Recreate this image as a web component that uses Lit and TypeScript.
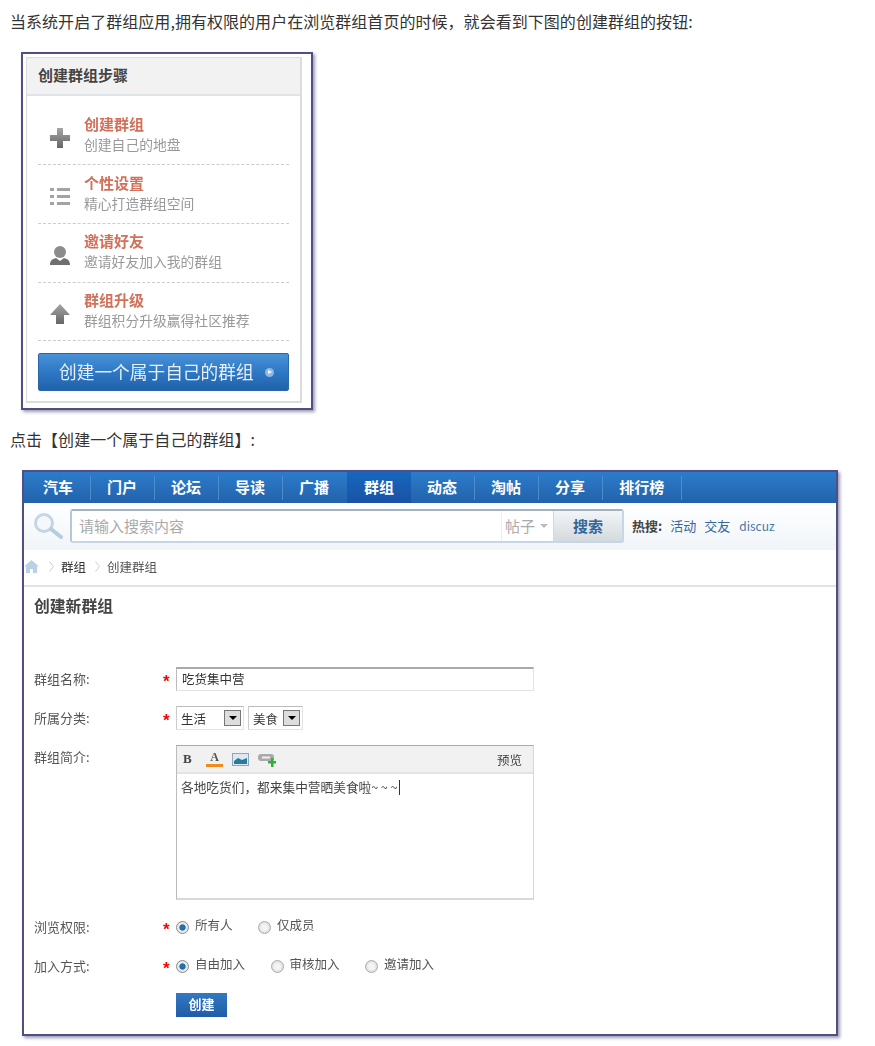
import { LitElement, html, css, svg } from "lit";
import { customElement } from "lit/decorators.js";

const steps = [
  { t: "创建群组", s: "创建自己的地盘", i: "plus" },
  { t: "个性设置", s: "精心打造群组空间", i: "list" },
  { t: "邀请好友", s: "邀请好友加入我的群组", i: "user" },
  { t: "群组升级", s: "群组积分升级赢得社区推荐", i: "up" },
];
const icons: Record<string, any> = {
  plus: svg`<path d="M8 1h6v7h7v6h-7v7H8v-7H1V8h7z" fill="url(#g)"/>`,
  list: svg`<g fill="#a3a3a3"><rect x="1" y="2" width="4" height="3"/><rect x="8" y="2" width="13" height="3"/><rect x="1" y="9" width="4" height="3"/><rect x="8" y="9" width="13" height="3"/><rect x="1" y="16" width="4" height="3"/><rect x="8" y="16" width="13" height="3"/></g>`,
  user: svg`<circle cx="11" cy="7" r="6" fill="#8c8c8c"/><path d="M1 20c0-5 3-6 6-7l4 3 4-3c3 1 6 2 6 7z" fill="#6f6f6f"/>`,
  up: svg`<path d="M11 1l10 11h-6v9H7v-9H1z" fill="url(#g)"/>`,
};
const stepIcon = (n: string) => html`<svg class="step-icon" viewBox="0 0 22 22"><defs><linearGradient id="g" x1="0" y1="0" x2="0" y2="1"><stop offset="0" stop-color="#a5a5a5"/><stop offset="1" stop-color="#666"/></linearGradient></defs>${icons[n]}</svg>`;
const navItems = ["汽车", "门户", "论坛", "导读", "广播", "群组", "动态", "淘帖", "分享", "排行榜"];

@customElement("app-root")
export class AppRoot extends LitElement {
  static styles = css`
    :host { display: block; padding: 10px 10px 0; box-sizing: border-box; height: 1046px; overflow: hidden; background: #fff; color: #333; font-family: "Microsoft YaHei", "Noto Sans CJK SC", "Liberation Sans", sans-serif; }
    p { margin: 0; font-size: 16px; line-height: 22px; padding-bottom: 2px; color: #333; white-space: nowrap; letter-spacing: .04px; }
    .shot { box-sizing: border-box; border: 2px solid #4f4f86; background: #fff; box-shadow: 2px 2px 3px rgba(60,60,110,.5); filter: blur(.35px); }
    .card1 { width: 292px; height: 358px; margin: 18px 0 18px 11px; padding: 3px 9px 5px 3px; }
    .panel { box-sizing: border-box; height: 100%; border: 1px solid #dcdcdc; border-width: 1px 2px 2px 1px; }
    .panel-head { box-sizing: border-box; height: 38px; background: #f2f2f2; border-bottom: 2px solid #dde4ea; padding-left: 11px; font-size: 15px; font-weight: 700; line-height: 33px; color: #444; }
    .steps { margin: 10.5px 11px 0 11px; }
    .step { box-sizing: border-box; height: 58.7px; display: flex; align-items: center; border-bottom: 1px dashed #ccc; padding-bottom: 3px; }
    .step-icon { width: 22px; height: 22px; margin: 9px 13px 0 11px; flex: none; }
    .step-t { font-size: 15px; font-weight: 700; line-height: 21px; color: #d2705a; }
    .step-s { font-size: 13.8px; line-height: 21px; color: #999; }
    .big-btn { box-sizing: border-box; height: 38px; margin: 12px 11px 0; padding: 0 0 3px 20px; border: 1px solid #2a66a8; border-radius: 2px; background: linear-gradient(#4a92d8, #2f7bc6 45%, #2161ab); color: #e8eef5; font-size: 17.7px; line-height: 30px; display: flex; align-items: center; gap: 11px; white-space: nowrap; }
    .big-btn i { width: 9px; height: 9px; margin-top: 3px; border-radius: 50%; background: #8cb8e2; position: relative; }
    .big-btn i::after { content: ""; position: absolute; left: 3px; top: 2px; border-left: 4px solid #fff; border-top: 2.5px solid transparent; border-bottom: 2.5px solid transparent; }
    .card2 { width: 816px; height: 566px; margin: 18px 0 0 12px; font-size: 13px; }
    .nav { height: 31px; display: flex; padding-left: 3px; background: linear-gradient(#2c7ccb, #2262ab); }
    .tab { box-sizing: border-box; padding: 0 17px 0 16px; margin: 4px 0 3px; color: #fff; font-size: 15px; font-weight: 700; line-height: 21px; border-right: 1px solid #4d8dcb; white-space: nowrap; }
    .tab.cur { margin: 0; padding: 4px 17px 0; border-right: 0; width: 64px; background: linear-gradient(#1667bd, #1a52a6); }
    .tab.before { border-right-color: transparent; }
    .search { box-sizing: border-box; height: 47px; display: flex; align-items: center; padding-bottom: 2px; background: linear-gradient(#fff, #f1f5f8); }
    .lens { width: 32px; height: 28px; margin: 0 6px 0 8px; flex: none; }
    .box { box-sizing: border-box; width: 554px; height: 34px; margin-right: 8px; flex: none; display: flex; border: 2px solid #c6d6e4; border-top-color: #9fb3c6; border-left-color: #b6c8d8; border-radius: 3px; background: #fff; }
    .ph { flex: 1; padding-left: 7px; font-size: 15px; line-height: 30px; color: #aaa; }
    .kind { box-sizing: border-box; width: 52px; padding-left: 3px; border-left: 1px solid #eaf0f4; font-size: 15px; line-height: 30px; color: #aaa; display: flex; align-items: center; gap: 5px; }
    .kind i { border-top: 4px solid #bbb; border-left: 4px solid transparent; border-right: 4px solid transparent; }
    .go { flex: none; width: 68px; border-left: 1px solid #cfd8df; background: linear-gradient(#f3f5f7, #d4dade); color: #336699; font-size: 15px; font-weight: 700; text-align: center; line-height: 30px; }
    .hot { display: flex; font-size: 13px; color: #369; align-items: center; }
    .hot b { color: #444; margin-right: 8px; }
    .hot span { margin-right: 8px; }
    .hot span:last-child { margin-left: 1px; font-size: 12px; color: #4a76a8; }
    .crumb { box-sizing: border-box; height: 37px; display: flex; align-items: center; border-bottom: 2px solid #e3e3e3; padding-bottom: 3px; color: #333; font-size: 12.5px; }
    .home { width: 15px; height: 13px; margin-top: 1px; flex: none; }
    .chev { width: 5px; height: 11px; margin: 0 7px 0 9px; flex: none; }
    .crumb .first { margin-left: 10px; }
    .crumb .last { color: #555; }
    .body { padding-left: 10px; }
    h2 { margin: 0; height: 80px; font-size: 15.8px; font-weight: 700; line-height: 38px; color: #444; }
    .form { display: grid; grid-template-columns: 129px 13px 358px; grid-auto-rows: auto; row-gap: 15px; color: #555; }
    .form > .lab { line-height: 24px; font-size: 13px; }
    .star { color: #f00; font-size: 17px; line-height: 30px; height: 24px; font-weight: 700; font-family: "Liberation Sans", sans-serif; }
    .input { box-sizing: border-box; height: 24px; border: 1px solid #e3e3e3; border-top: 2px solid #aaa; border-left-color: #bbb; padding-left: 5px; line-height: 20px; color: #333; font-size: 12.5px; }
    .sels { display: flex; gap: 4px; height: 24px; }
    .sel { box-sizing: border-box; border: 1px solid #e3e3e3; border-top-color: #bbb; border-left-color: #ccc; display: flex; align-items: center; justify-content: space-between; padding: 0 2px 0 4px; font-size: 12.5px; color: #333; }
    .sel.a { width: 68px; } .sel.b { width: 55px; }
    .arrow { box-sizing: border-box; width: 17px; height: 16px; border: 1px solid #777; background: #ddd; display: flex; align-items: center; justify-content: center; }
    .arrow::after { content: ""; border-top: 4px solid #000; border-left: 4px solid transparent; border-right: 4px solid transparent; }
    .editor { height: 155px; box-sizing: border-box; border: 1px solid #d8d8d8; border-top-color: #aaa; border-left-color: #bbb; border-bottom-width: 2px; }
    .tools { box-sizing: border-box; height: 28px; background: #f1f1f1; border-bottom: 2px solid #e3e3e3; display: flex; align-items: center; padding: 0 11px 0 6px; color: #333; }
    .tools b { font-family: "Liberation Serif", serif; font-size: 13px; color: #444; width: 23px; }
    .tools .a { font-family: "Liberation Serif", serif; font-weight: 700; font-size: 12px; width: 17px; text-align: center; margin-right: 9px; line-height: 13px; height: 16px; color: #555; border-bottom: 3px solid #f08a1d; box-sizing: border-box; }
    .tools svg { flex: none; }
    .tools .pv { margin-left: auto; font-size: 12.5px; color: #444; }
    .text { padding: 3px 0 0 4px; font-size: 12.7px; line-height: 20px; color: #444; display: flex; align-items: center; }
    .tilde { letter-spacing: 2.5px; margin-right: -1px; }
    .cursor { display: inline-block; width: 1px; height: 15px; background: #333; }
    .radios { display: flex; align-items: center; height: 24px; line-height: 22px; font-size: 12.5px; padding-bottom: 4px; box-sizing: border-box; }
    .radio { width: 13px; height: 13px; border-radius: 50%; box-sizing: border-box; border: 1px solid #aaa; background: radial-gradient(#f4f4f4 35%, #ccc); margin: 4px 6px 0 0; flex: none; }
    .radio.on { background: radial-gradient(#1a7fb8 0, #1a6ca5 35%, #e8e8e8 45%); border-color: #888; }
    .radios span + .radio { margin-left: 25.5px; }
    .create { width: 51px; height: 24px; background: linear-gradient(#3379c2, #1f5ca8); color: #fff; font-size: 13px; font-weight: 700; line-height: 22px; text-align: center; }
  `;

  render() {
    return html`
      <p>当系统开启了群组应用,拥有权限的用户在浏览群组首页的时候，就会看到下图的创建群组的按钮:</p>
      <div class="shot card1">
        <div class="panel">
          <div class="panel-head">创建群组步骤</div>
          <div class="steps">
            ${steps.map((x) => html`<div class="step">${stepIcon(x.i)}<div><div class="step-t">${x.t}</div><div class="step-s">${x.s}</div></div></div>`)}
          </div>
          <div class="big-btn">创建一个属于自己的群组<i></i></div>
        </div>
      </div>
      <p>点击【创建一个属于自己的群组】:</p>
      <div class="shot card2">
        <div class="nav">
          ${navItems.map((n, i) => html`<div class="tab ${i === 5 ? "cur" : ""} ${i === 4 ? "before" : ""}">${n}</div>`)}
        </div>
        <div class="search">
          <svg class="lens" viewBox="0 0 32 28"><circle cx="12" cy="11" r="8.5" fill="#f4f8fb" stroke="#c2d6e6" stroke-width="3"/><path d="M19 17l10 8" stroke="#b5cde0" stroke-width="4" stroke-linecap="round"/></svg>
          <div class="box">
            <div class="ph">请输入搜索内容</div>
            <div class="kind">帖子<i></i></div>
            <div class="go">搜索</div>
          </div>
          <div class="hot"><b>热搜:</b><span>活动</span><span>交友</span><span>discuz</span></div>
        </div>
        <div class="crumb">
          <svg class="home" viewBox="0 0 15 13"><path d="M7.5 0L15 6.5h-2V13H9V9H6v4H2V6.500H0z" fill="#b9d1e6"/></svg>
          <svg class="chev first" viewBox="0 0 5 11"><path d="M.5.5l4 5-4 5" fill="none" stroke="#ccc"/></svg>
          <span>群组</span>
          <svg class="chev" viewBox="0 0 5 11"><path d="M.5.5l4 5-4 5" fill="none" stroke="#ccc"/></svg>
          <span class="last">创建群组</span>
        </div>
        <div class="body">
          <h2>创建新群组</h2>
          <div class="form">
            <div class="lab">群组名称:</div><div class="star">*</div><div class="input">吃货集中营</div>
            <div class="lab">所属分类:</div><div class="star">*</div>
            <div class="sels"><div class="sel a">生活<span class="arrow"></span></div><div class="sel b">美食<span class="arrow"></span></div></div>
            <div class="lab">群组简介:</div><div></div>
            <div class="editor">
              <div class="tools">
                <b>B</b><span class="a">A</span>
                <svg width="17" height="13" viewBox="0 0 17 13" style="margin-right:9px"><rect x=".5" y=".5" width="16" height="12" fill="#dce9f3" stroke="#8aa7bd"/><path d="M2 8l4-3 4 2 5-2v6H2z" fill="#2a7a9c"/></svg>
                <svg width="18" height="15" viewBox="0 0 18 15"><rect x="0" y="2" width="16" height="7" rx="3" fill="#aaa"/><rect x="4" y="4.500" width="8" height="2" fill="#eee"/><path d="M11 9h3V6h2.500v3H19v2.500h-2.500V15H14v-3.500h-3z" fill="#2fae3c" transform="translate(-1 0)"/></svg>
                <span class="pv">预览</span>
              </div>
              <div class="text">各地吃货们，都来集中营晒美食啦<span class="tilde">~~~</span><span class="cursor"></span></div>
            </div>
            <div class="lab">浏览权限:</div><div class="star">*</div>
            <div class="radios"><i class="radio on"></i><span>所有人</span><i class="radio"></i><span>仅成员</span></div>
            <div class="lab">加入方式:</div><div class="star">*</div>
            <div class="radios"><i class="radio on"></i><span>自由加入</span><i class="radio"></i><span>审核加入</span><i class="radio"></i><span>邀请加入</span></div>
            <div></div><div></div><div class="create">创建</div>
          </div>
        </div>
      </div>
    `;
  }
}
